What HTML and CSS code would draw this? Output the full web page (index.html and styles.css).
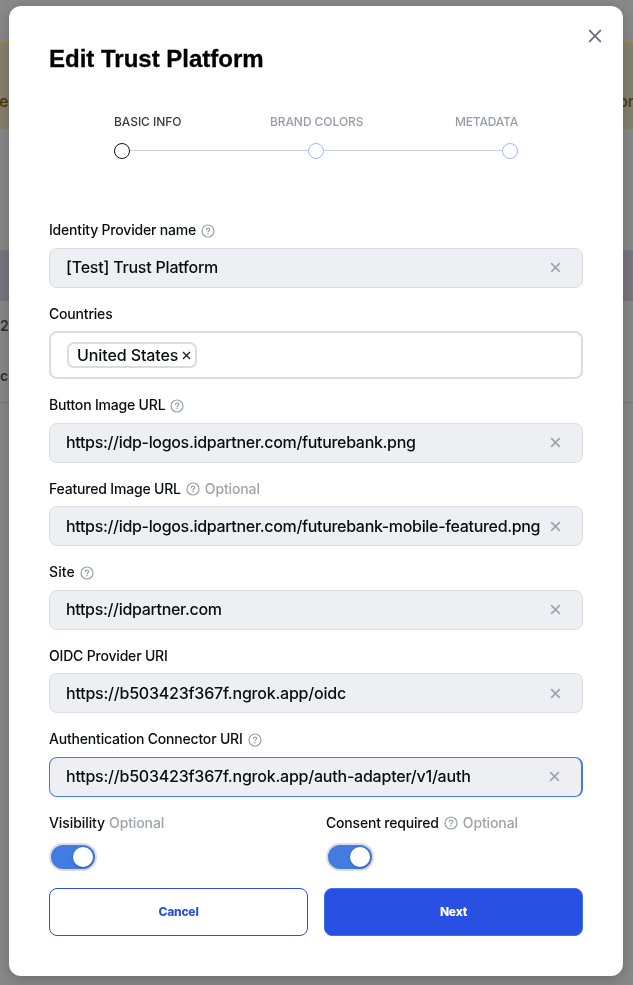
FILE: index.html
```html
<!DOCTYPE html>
<html lang="en">
<head>
<meta charset="utf-8">
<title>Edit Trust Platform</title>
<link rel="stylesheet" href="styles.css">
</head>
<body>
<svg class="sprite" aria-hidden="true">
  <symbol id="help" viewBox="0 0 14 14"><g fill="none" stroke="currentColor" stroke-linecap="round"><circle cx="7" cy="7" r="6" stroke-width="1.2"/><path d="M5.3 5.6C5.4 3.5 8.9 3.6 8.8 5.5C8.7 6.7 7 6.7 7 7.9" stroke-width="1.2"/></g><circle cx="7" cy="9.8" r=".75" fill="currentColor"/></symbol>
  <symbol id="clear" viewBox="0 0 12 12"><path d="M1.3 1.3L10.7 10.7M10.7 1.3L1.3 10.7" fill="none" stroke="currentColor" stroke-width="1.8"/></symbol>
</svg>
<div class="page">
  <div class="banner"><span>er</span><span>or</span></div>
  <div class="table-head"></div>
  <div class="table-body"><b>2</b><b>c</b></div>
</div>
<div class="overlay">
  <main class="modal">
    <header class="head">
      <h1>Edit Trust Platform</h1>
      <svg class="close" viewBox="0 0 14 14"><path d="M1.2 1.2L12.8 12.8M12.8 1.2L1.2 12.8" fill="none" stroke="currentColor" stroke-width="1.7"/></svg>
    </header>
    <div class="steps">
      <div class="step-labels"><span class="current">BASIC INFO</span><span>BRAND COLORS</span><span>METADATA</span></div>
      <div class="track"><i class="dot current"></i><i class="line"></i><i class="dot"></i><i class="line"></i><i class="dot"></i></div>
    </div>
    <form>
      <div class="label"><span>Identity Provider name</span><svg class="help"><use href="#help"/></svg></div>
      <div class="field"><span class="name">[Test] Trust Platform</span><svg class="clear"><use href="#clear"/></svg></div>
      <div class="label"><span>Countries</span></div>
      <div class="field select"><div class="tag"><span>United States</span><svg class="remove"><use href="#clear"/></svg></div></div>
      <div class="label"><span>Button Image URL</span><svg class="help"><use href="#help"/></svg></div>
      <div class="field"><span class="url">https://idp-logos.idpartner.com/futurebank.png</span><svg class="clear"><use href="#clear"/></svg></div>
      <div class="label"><span>Featured Image URL</span><svg class="help"><use href="#help"/></svg><em>Optional</em></div>
      <div class="field"><span class="url">https://idp-logos.idpartner.com/futurebank-mobile-featured.png</span><svg class="clear"><use href="#clear"/></svg></div>
      <div class="label"><span class="site">Site</span><svg class="help"><use href="#help"/></svg></div>
      <div class="field"><span class="url">https://idpartner.com</span><svg class="clear"><use href="#clear"/></svg></div>
      <div class="label"><span>OIDC Provider URI</span></div>
      <div class="field"><span class="endpoint">https://b503423f367f.ngrok.app/oidc</span><svg class="clear"><use href="#clear"/></svg></div>
      <div class="label"><span>Authentication Connector URI</span><svg class="help"><use href="#help"/></svg></div>
      <div class="field focus"><span class="endpoint">https://b503423f367f.ngrok.app/auth-adapter/v1/auth</span><svg class="clear"><use href="#clear"/></svg></div>
      <div class="toggles">
        <div><div class="label"><span class="visibility">Visibility</span><em class="near">Optional</em></div><div class="switch"><i></i></div></div>
        <div><div class="label"><span>Consent required</span><svg class="help"><use href="#help"/></svg><em>Optional</em></div><div class="switch"><i></i></div></div>
      </div>
      <div class="actions"><button type="button">Cancel</button><button type="button" class="primary">Next</button></div>
    </form>
  </main>
</div>
</body>
</html>
```
FILE: styles.css
```css
* { box-sizing: border-box; }
body { margin: 0; height: 985px; overflow: hidden; background: #898989; font-family: Inter, "Liberation Sans", sans-serif; font-weight: 450; color: #0b0c0f; }
.sprite { position: absolute; width: 0; height: 0; }
.page { height: 985px; padding-top: 42px; overflow: hidden; }
.banner { height: 88px; background: #868270; border: solid #a08845; border-width: 1px 0; display: flex; justify-content: space-between; padding: 47px 0 0; font-size: 16px; line-height: 22px; color: #4a3710; }
.banner span:first-child { margin-left: -1px; }
.banner span:last-child { margin-right: -1px; }
.table-head { height: 51px; margin-top: 120px; background: #7b7780; }
.table-body { height: 102px; padding-top: 15px; border-bottom: 1px solid #777; font-size: 14px; line-height: 20px; color: #303033; display: flex; flex-direction: column; gap: 30px; }
.table-body b { font-weight: 600; }
.overlay { position: fixed; inset: 0; padding: 6px 10px 9px 9px; }
.modal { height: 970px; background: #fff; border-radius: 12px; padding: 0 40px; box-shadow: 0 4px 16px rgba(0,0,0,.22); }
.head { display: flex; justify-content: space-between; height: 108px; }
h1 { margin: 38px 0 0; font: bold 24px/30px "Liberation Sans", sans-serif; color: #000; -webkit-text-stroke: .3px #000; }
.close { width: 14px; height: 14px; margin: 23px -19px 0 0; color: #686b80; }
.steps { height: 105.8px; padding: 0 65px; }
.step-labels { display: flex; justify-content: space-between; font-size: 12px; line-height: 16px; letter-spacing: -.06px; color: #979bab; }
.step-labels .current { color: #3c3c3e; }
.step-labels span:nth-child(2) { margin-left: -3px; }
.step-labels span:nth-child(3) { letter-spacing: -.18px; }
.track { display: flex; align-items: center; margin-top: 13px; height: 16px; }
.dot { width: 16px; height: 16px; border: 1px solid #9db9f5; border-radius: 50%; flex: none; }
.dot.current { border-color: #111; }
.line { flex: 1; height: 1px; margin-bottom: 1px; background: #ccd1e0; }
.label { height: 20px; margin-bottom: 8px; display: flex; align-items: center; font-size: 14px; line-height: 20px; white-space: nowrap; padding-top: .6px; letter-spacing: -.19px; }
.label .site { letter-spacing: .1px; }
.label .visibility { letter-spacing: -.08px; }
.help { width: 14px; height: 14px; margin: 1px 0 0 5px; color: #9da0aa; }
.label em { font-style: normal; font-weight: 500; color: #a0a3ad; margin: 1px 0 0 5px; letter-spacing: -.12px; }
.label em.near { margin-left: 4px; }
.field { height: 40px; margin-bottom: 15.5px; border: 1px solid #dbdce1; border-radius: 8px; background: #eeeff3; padding: 0 21px 0 16px; display: flex; align-items: center; justify-content: space-between; font-size: 16px; white-space: nowrap; }
.field > span { padding-bottom: 1px; }
.name { letter-spacing: -.22px; }
.url { letter-spacing: -.32px; }
.endpoint { letter-spacing: -.22px; }
.clear { width: 11px; height: 11px; color: #a0a3aa; flex: none; }
.field.select { height: 48px; background: #fff; border-width: 2px; }
.tag { height: 26px; border: 2px solid #dbdce2; border-radius: 7px; display: flex; align-items: center; padding: 0 4px 0 8px; gap: 4px; letter-spacing: -.1px; }
.remove { width: 9px; height: 9px; color: #222; stroke-width: 1.4; }
.field.focus { border-color: #427ce0; border-right-width: 2px; }
.toggles { display: grid; grid-template-columns: 277px 1fr; height: 75.7px; }
.switch { width: 48px; height: 28px; margin-top: 10.5px; border: 2px solid #dcdde1; border-radius: 14px; background: #427ce0; padding: 2px; display: flex; justify-content: flex-end; }
.switch i { width: 20px; height: 20px; border-radius: 50%; background: #fff; box-shadow: 0 1px 3px rgba(0,0,0,.25); }
.actions { display: grid; grid-template-columns: 1fr 1fr; gap: 16px; }
button { height: 48px; border: 1px solid #2850e0; border-radius: 8px; background: #fff; color: #2850e0; font: 800 12px Inter, sans-serif; letter-spacing: -.2px; padding: 0 0 1px; }
.primary { background: #2850e3; color: #fff; border-color: #3c72e0; }
```
